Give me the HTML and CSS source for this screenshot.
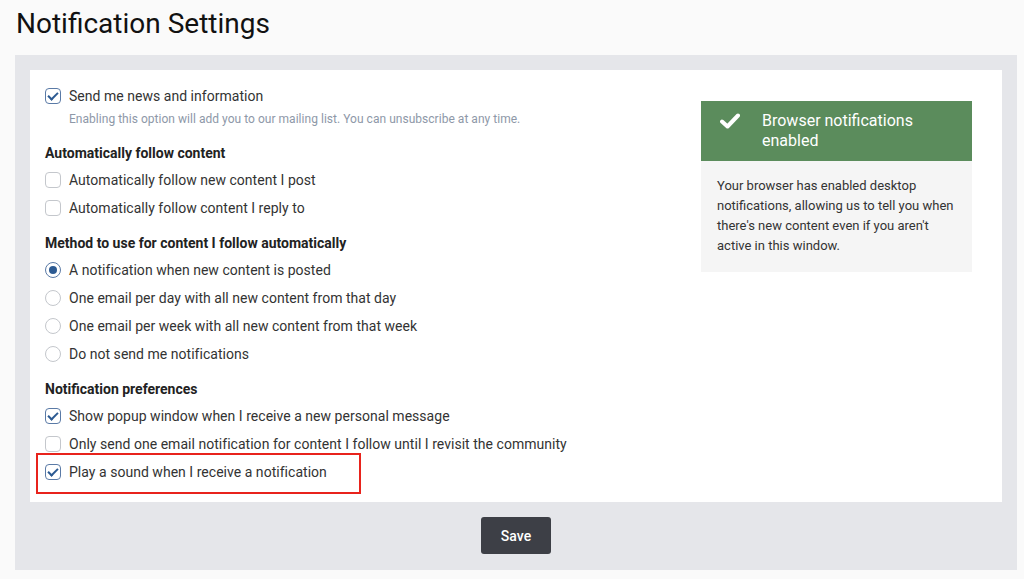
FILE: index.html
```html
<!DOCTYPE html>
<html lang="en">
<head>
    <meta charset="UTF-8">
    <meta name="viewport" content="width=device-width, initial-scale=1.0">
    <title>Notification Settings</title>
    <link rel="stylesheet" href="styles.css">
</head>
<body>
    <h1 class="page-title">Notification Settings</h1>

    <div class="settings-panel">
        <div class="settings-card">
            <div class="options">
                <label class="option">
                    <span class="box checked"></span>
                    Send me news and information
                </label>
                <p class="hint">Enabling this option will add you to our mailing list. You can unsubscribe at any time.</p>

                <h3 class="group-title first">Automatically follow content</h3>
                <label class="option"><span class="box"></span>Automatically follow new content I post</label>
                <label class="option"><span class="box"></span>Automatically follow content I reply to</label>

                <h3 class="group-title">Method to use for content I follow automatically</h3>
                <label class="option"><span class="radio checked"></span>A notification when new content is posted</label>
                <label class="option"><span class="radio"></span>One email per day with all new content from that day</label>
                <label class="option"><span class="radio"></span>One email per week with all new content from that week</label>
                <label class="option"><span class="radio"></span>Do not send me notifications</label>

                <h3 class="group-title">Notification preferences</h3>
                <label class="option"><span class="box checked"></span>Show popup window when I receive a new personal message</label>
                <label class="option"><span class="box"></span>Only send one email notification for content I follow until I revisit the community</label>
                <label class="option highlighted">
                    <span class="box checked"></span>Play a sound when I receive a notification
                    <span class="highlight-frame"></span>
                </label>
            </div>

            <div class="browser-status">
                <div class="status-head">
                    <svg class="status-icon" width="20" height="16" viewBox="0 0 20 16">
                        <path d="M2 8.5 L7.5 13.5 L18 2.5" fill="none" stroke="#fff" stroke-width="4" stroke-linecap="round" stroke-linejoin="round"/>
                    </svg>
                    <span>Browser notifications enabled</span>
                </div>
                <p class="status-body">Your browser has enabled desktop notifications, allowing us to tell you when there's new content even if you aren't active in this window.</p>
            </div>
        </div>

        <div class="actions">
            <button class="save-btn">Save</button>
        </div>
    </div>
</body>
</html>
```

FILE: styles.css
```css
body {
    font-family: Roboto, "Liberation Sans", sans-serif;
    background: #fafafa;
    color: #333;
    margin: 0;
    padding: 0;
}
.page-title {
    font-size: 28px;
    font-weight: 400;
    color: #111;
    margin: 0;
    padding: 8px 16px 0;
    height: 47px;
    line-height: 32px;
}
.settings-panel {
    background: #e5e6ea;
    margin: 0 7px 0 15px;
    padding: 15px 15px 16px;
}
.settings-card {
    background: #fff;
    display: grid;
    grid-template-columns: 1fr 271px;
    column-gap: 20px;
    padding: 12px 30px 16px 15px;
}
.options {
    display: flex;
    flex-direction: column;
}
.option {
    position: relative;
    display: flex;
    align-items: center;
    height: 28px;
    font-size: 14px;
    letter-spacing: 0.03px;
    color: #333;
}
.box,
.radio {
    width: 16px;
    height: 16px;
    box-sizing: border-box;
    border: 1px solid #c4c7cc;
    border-radius: 4px;
    margin-right: 8px;
    flex-shrink: 0;
    position: relative;
    background: #fff;
}
.box.checked {
    border-color: #5a7aa6;
}
.box.checked::after {
    content: "";
    position: absolute;
    left: 4px;
    top: 1px;
    width: 4px;
    height: 8px;
    border: solid #2c5a92;
    border-width: 0 2px 2px 0;
    transform: rotate(45deg);
}
.radio {
    border-radius: 50%;
}
.radio.checked {
    border-color: #5a7aa6;
}
.radio.checked::after {
    content: "";
    position: absolute;
    left: 3px;
    top: 3px;
    width: 8px;
    height: 8px;
    border-radius: 50%;
    background: #2c5a92;
}
.hint {
    font-size: 12px;
    letter-spacing: 0.03px;
    color: #8e98a8;
    margin: 0 0 0 24px;
    line-height: 18px;
}
.group-title {
    font-size: 14px;
    font-weight: 700;
    color: #222;
    margin: 11px 0 3px;
    line-height: 20px;
}
.group-title.first {
    margin-top: 15px;
}
.highlight-frame {
    position: absolute;
    left: -9px;
    top: -5px;
    width: 325px;
    height: 41px;
    box-sizing: border-box;
    border: 2px solid #e8231c;
}
.browser-status {
    margin-top: 19px;
    align-self: start;
    background: #f5f5f5;
}
.status-head {
    background: #5b8c5c;
    color: #fff;
    display: flex;
    align-items: flex-start;
    padding: 10px 16px 10px 19px;
    font-size: 16px;
    line-height: 20px;
}
.status-icon {
    margin: 2px 22px 0 0;
    flex-shrink: 0;
}
.status-body {
    font-size: 13px;
    line-height: 20px;
    color: #333;
    margin: 0;
    padding: 15px 14px 16px 16px;
}
.actions {
    display: flex;
    justify-content: center;
    padding-top: 15px;
}
.save-btn {
    background: #3d3f46;
    color: #fff;
    border: none;
    border-radius: 3px;
    width: 70px;
    height: 37px;
    font-family: Roboto, "Liberation Sans", sans-serif;
    font-size: 14px;
    font-weight: 500;
    cursor: pointer;
}
```
